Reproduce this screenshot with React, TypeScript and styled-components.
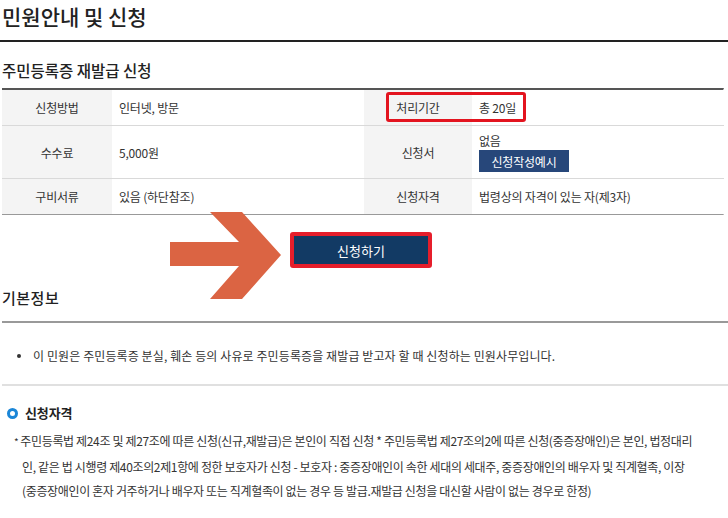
import React from "react";
import styled, { createGlobalStyle } from "styled-components";

const Global = createGlobalStyle`
  html, body { margin: 0; padding: 0; background: #fff; }
  body {
    font-family: "Noto Sans CJK KR", "Noto Sans", sans-serif;
    color: #333;
    overflow: hidden;
  }
  * { box-sizing: border-box; }
`;

const Page = styled.div`
  width: 728px;
  height: 518px;
  overflow: hidden;
  padding: 0 4px 0 2px;
`;

const Title = styled.h1`
  margin: 0 -4px 0 -2px;
  padding: 0 0 0 2px;
  height: 42px;
  line-height: 32px;
  font-size: 21px;
  font-weight: 500;
  color: #222;
  letter-spacing: 0;
  border-bottom: 2px solid #222;
`;

const SubTitle = styled.h2`
  margin: 15px 0 5px;
  line-height: 26px;
  font-size: 15.5px;
  font-weight: 500;
  color: #222;
  letter-spacing: 0;
`;

const InfoTable = styled.div`
  position: relative;
  display: grid;
  grid-template-columns: 110px 252px 108px 252px;
  border-top: 2px solid #555;
  border-bottom: 1px solid #999;
  border-right: 1px solid #e2e2e2;
  width: 722px;
`;

const Cell = styled.div<{ $label?: boolean; $h: number; $last?: boolean }>`
  height: ${(p) => p.$h}px;
  display: flex;
  flex-direction: column;
  justify-content: center;
  align-items: ${(p) => (p.$label ? "center" : "flex-start")};
  padding: ${(p) => (p.$label ? "0" : "0 0 0 7px")};
  background: ${(p) => (p.$label ? "#f4f4f4" : "#fff")};
  border-bottom: ${(p) => (p.$last ? "none" : "1px solid #d9d9d9")};
  font-size: 12px;
  letter-spacing: -0.2px;
  color: #333;
  line-height: 17px;
`;

const ExampleButton = styled.button`
  margin-top: 1px;
  width: 90px;
  height: 22px;
  border: none;
  background: #27477a;
  color: #fff;
  font-family: inherit;
  font-size: 12px;
  letter-spacing: -0.2px;
  padding: 0;
  cursor: pointer;
`;

const Highlight = styled.div`
  position: absolute;
  left: 384px;
  top: 2px;
  width: 140px;
  height: 30px;
  border: 3px solid #e3141f;
  border-radius: 3px;
  pointer-events: none;
`;

const ActionArea = styled.div`
  position: relative;
  display: flex;
  justify-content: center;
  padding: 17px 0 0;
  height: 73px;
`;

const Arrow = styled.svg`
  position: absolute;
  left: 166px;
  top: -6px;
`;

const ApplyFrame = styled.div`
  border: 4px solid #e61e2b;
  border-radius: 3px;
  height: 36px;
  width: 142px;
  display: flex;
  margin-left: -4px;
`;

const ApplyButton = styled.button`
  flex: 1;
  border: none;
  background: #123a64;
  color: #fff;
  font-family: inherit;
  font-size: 13px;
  letter-spacing: 0;
  padding: 0;
  cursor: pointer;
`;

const SectionTitle = styled.h3`
  margin: -3px -4px 0 0;
  height: 38px;
  line-height: 26px;
  font-size: 15px;
  font-weight: 500;
  color: #222;
  letter-spacing: 0.5px;
  border-bottom: 2px solid #999;
`;

const BulletList = styled.ul`
  margin: 0 -4px 0 0;
  padding: 22px 0 17px 31px;
  border-bottom: 2px solid #e0e0e0;
  list-style: none;
`;

const BulletItem = styled.li`
  position: relative;
  font-size: 12px;
  line-height: 22px;
  letter-spacing: 0.1px;
  color: #333;
  &::before {
    content: "";
    position: absolute;
    left: -16px;
    top: 9px;
    width: 4px;
    height: 4px;
    border-radius: 50%;
    background: #333;
  }
`;

const QualHeading = styled.h4`
  display: flex;
  align-items: center;
  gap: 7px;
  margin: 17px 0 0 5px;
  line-height: 20px;
  font-size: 13px;
  font-weight: 700;
  color: #222;
  letter-spacing: -0.1px;
`;

const Ring = styled.span`
  width: 11px;
  height: 11px;
  border-radius: 50%;
  border: 3px solid #1b86d7;
`;

const Para = styled.p`
  margin: 6px 0 0;
  padding-left: 20px;
  text-indent: -8px;
  font-size: 12px;
  line-height: 24.5px;
  letter-spacing: -0.35px;
  color: #333;
  white-space: nowrap;
`;

const Star = styled.span`
  font-size: 10px;
  margin-right: 2px;
`;

const SubItem = styled.p`
  margin: 10px 0 0 20px;
  font-size: 12px;
  line-height: 20px;
  letter-spacing: -0.2px;
  color: #333;
`;

export default function App() {
  return (
    <>
      <Global />
      <Page>
        <Title>민원안내 및 신청</Title>
        <SubTitle>주민등록증 재발급 신청</SubTitle>
        <InfoTable>
          <Cell $label $h={36}>신청방법</Cell>
          <Cell $h={36}>인터넷, 방문</Cell>
          <Cell $label $h={36}>처리기간</Cell>
          <Cell $h={36}>총 20일</Cell>

          <Cell $label $h={53}>수수료</Cell>
          <Cell $h={53}>5,000원</Cell>
          <Cell $label $h={53}>신청서</Cell>
          <Cell $h={53}>
            <span>없음</span>
            <ExampleButton>신청작성예시</ExampleButton>
          </Cell>

          <Cell $label $h={35} $last>구비서류</Cell>
          <Cell $h={35} $last>있음 (하단참조)</Cell>
          <Cell $label $h={35} $last>신청자격</Cell>
          <Cell $h={35} $last>법령상의 자격이 있는 자(제3자)</Cell>

          <Highlight />
        </InfoTable>

        <ActionArea>
          <Arrow width="115" height="90" viewBox="0 0 115 90">
            <polygon
              points="2,33 71,33 42,3 74,3 113,46 74,90 42,90 71,57 2,57"
              fill="#db6443"
            />
          </Arrow>
          <ApplyFrame>
            <ApplyButton>신청하기</ApplyButton>
          </ApplyFrame>
        </ActionArea>

        <SectionTitle>기본정보</SectionTitle>
        <BulletList>
          <BulletItem>
            이 민원은 주민등록증 분실, 훼손 등의 사유로 주민등록증을 재발급 받고자 할 때 신청하는 민원사무입니다.
          </BulletItem>
        </BulletList>

        <QualHeading>
          <Ring />
          신청자격
        </QualHeading>
        <Para>
          <Star>*</Star>주민등록법 제24조 및 제27조에 따른 신청(신규,재발급)은 본인이 직접 신청 * 주민등록법 제27조의2에 따른 신청(중증장애인)은 본인, 법정대리
          <br />
          인, 같은 법 시행령 제40조의2제1항에 정한 보호자가 신청 - 보호자 : 중증장애인이 속한 세대의 세대주, 중증장애인의 배우자 및 직계혈족, 이장
          <br />
          (중증장애인이 혼자 거주하거나 배우자 또는 직계혈족이 없는 경우 등 발급.재발급 신청을 대신할 사람이 없는 경우로 한정)
        </Para>
        <SubItem>- 필요 정보 및 구비서류 안내</SubItem>
      </Page>
    </>
  );
}
